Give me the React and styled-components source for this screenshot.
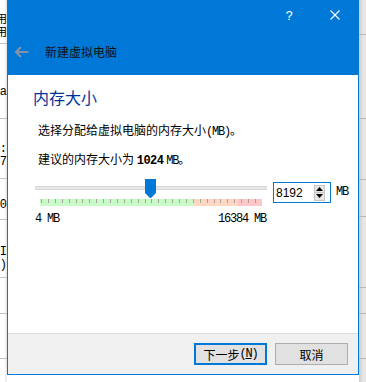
import React from "react";
import styled, { createGlobalStyle } from "styled-components";

const Global = createGlobalStyle`
  html, body { margin: 0; padding: 0; background: #ffffff; }
  body { width: 366px; height: 382px; overflow: hidden; font-family: "Noto Sans CJK SC", "Noto Sans", sans-serif; }
  * { box-sizing: border-box; }
`;

const CJK = `"Noto Sans CJK SC", "Noto Sans", sans-serif`;
const MONO = `"Liberation Mono", "DejaVu Sans Mono", monospace`;
const BLUE = "#0078d7";

const Page = styled.div`
  display: flex;
  width: 366px;
  height: 382px;
  overflow: hidden;
`;

const Strip = styled.div`
  width: 7px;
  flex: none;
  display: flex;
  flex-direction: column;
  background: ${(p) => (p.$right ? "linear-gradient(to right, #cdcdcd, #e9e9e9 70%, #e2e2e2)" : "linear-gradient(to right, #ffffff 60%, #e4e4e4)")};
`;

const StripRow = styled.div`
  height: ${(p) => p.$h}px;
  flex: none;
  border-bottom: 1px solid ${(p) => (p.$right ? "#b9b9b9" : "#c4c4c4")};
  display: flex;
  flex-direction: column;
  justify-content: ${(p) => p.$justify || "flex-end"};
  align-items: flex-end;
  gap: 1px;
  overflow: hidden;
  padding: ${(p) => p.$pad || "0"};
`;

const StripText = styled.div`
  font-family: ${MONO};
  font-size: 12px;
  line-height: 12px;
  color: #000;
  white-space: nowrap;
`;

const StripCJK = styled(StripText)`
  font-family: ${CJK};
  font-size: 11px;
  line-height: 12px;
  height: 12px;
  overflow: hidden;
`;

const Dialog = styled.div`
  width: 352px;
  height: 375px;
  flex: none;
  border: 1px solid ${BLUE};
  border-top: none;
  display: flex;
  flex-direction: column;
  background: #fff;
`;

const TitleBar = styled.div`
  height: 30px;
  background: ${BLUE};
  display: flex;
  justify-content: flex-end;
  flex: none;
`;

const CaptionButton = styled.div`
  width: 46px;
  height: 30px;
  display: flex;
  align-items: center;
  justify-content: center;
  color: #fff;
  font-family: "Liberation Sans", sans-serif;
  font-size: 13px;
`;

const Header = styled.div`
  height: 45px;
  background: ${BLUE};
  display: flex;
  align-items: center;
  padding-left: 7px;
  padding-bottom: 1px;
  flex: none;
`;

const BackArrow = styled.svg`
  width: 14px;
  height: 12px;
  margin-right: 16px;
`;

const HeaderTitle = styled.div`
  font-family: ${CJK};
  font-size: 12px;
  line-height: 14px;
  color: #111;
`;

const Content = styled.div`
  flex: 1;
  padding: 13px 0 0 25px;
  display: flex;
  flex-direction: column;
`;

const Heading = styled.div`
  font-family: ${CJK};
  font-size: 16px;
  line-height: 18px;
  color: #003399;
`;

const Para = styled.div`
  font-family: ${CJK};
  font-size: 12px;
  line-height: 14px;
  color: #000;
  margin-left: 5px;
  margin-top: ${(p) => p.$mt}px;
  white-space: nowrap;
`;

const Latin = styled.span`
  font-family: ${MONO};
  font-size: 12px;
  letter-spacing: ${(p) => (p.$bold ? "-0.5px" : "-1.2px")};
  font-weight: ${(p) => (p.$bold ? 700 : 400)};
`;

const SliderRow = styled.div`
  display: flex;
  align-items: flex-start;
  margin-top: 11px;
  margin-left: 2px;
`;

const SliderCol = styled.div`
  width: 232px;
  display: flex;
  flex-direction: column;
`;

const SliderBox = styled.div`
  position: relative;
  height: 27px;
`;

const Track = styled.div`
  margin-top: 7px;
  height: 4px;
  border-top: 1px solid #d6d6d6;
  border-bottom: 1px solid #d6d6d6;
  background: #e7e7e7;
`;

const Ticks = styled.svg`
  display: block;
  margin: 9px 0 0 5px;
`;

const Thumb = styled.svg`
  position: absolute;
  left: 110px;
  top: 0;
`;

const Scale = styled.div`
  display: flex;
  justify-content: space-between;
  margin-top: 7px;
  font-family: ${MONO};
  font-size: 12px;
  letter-spacing: -1.2px;
  line-height: 12px;
  color: #000;
  padding-right: 1px;
`;

const SpinBox = styled.div`
  width: 58px;
  height: 21px;
  margin: 3px 0 0 6px;
  border: 1px solid ${BLUE};
  display: flex;
  align-items: center;
  justify-content: space-between;
  padding: 0 5px 0 2px;
`;

const SpinValue = styled.div`
  font-family: "Liberation Sans", sans-serif;
  font-size: 12px;
  color: #000;
`;

const SpinButtons = styled.div`
  width: 11px;
  height: 16px;
  display: flex;
  flex-direction: column;
  border: 1px solid #c7c7c7;
  background: #e6e6e6;
`;

const SpinHalf = styled.div`
  flex: 1;
  display: flex;
  align-items: center;
  justify-content: center;
  border-top: ${(p) => (p.$bottom ? "1px solid #c7c7c7" : "none")};
`;

const Unit = styled.div`
  font-family: ${MONO};
  font-size: 12px;
  letter-spacing: -1.2px;
  margin: 7px 0 0 5px;
  line-height: 12px;
`;

const Footer = styled.div`
  height: 41px;
  flex: none;
  background: #f0f0f0;
  border-top: 1px solid #dfdfdf;
  display: flex;
  justify-content: flex-end;
  align-items: flex-start;
  gap: 8px;
  padding: 9px 10px 0 0;
`;

const Button = styled.div`
  width: 73px;
  height: 22px;
  background: #e1e1e1;
  border: ${(p) => (p.$primary ? `2px solid ${BLUE}` : "1px solid #adadad")};
  display: flex;
  align-items: center;
  justify-content: center;
  font-family: ${CJK};
  font-size: 12px;
  color: #000;
  white-space: nowrap;
`;

const Accel = styled.span`
  font-family: ${MONO};
  font-size: 12px;
  letter-spacing: -1.2px;
  u { text-decoration: underline; }
`;

function TickBar() {
  const ticks = [];
  for (let i = 0; i <= 32; i++) {
    const x = Math.round(1 + i * 6.9) + 0.5;
    ticks.push(<line key={i} x1={x} y1={0} x2={x} y2={4} stroke="#a8a49c" strokeWidth="1" />);
  }
  return (
    <Ticks width="222" height="7" viewBox="0 0 222 7">
      <rect x="0" y="0" width="154" height="7" fill="#c8fbc8" />
      <rect x="154" y="0" width="44" height="7" fill="#fed6c2" />
      <rect x="198" y="0" width="24" height="7" fill="#fec6c6" />
      {ticks}
    </Ticks>
  );
}

export default function App() {
  return (
    <>
      <Global />
      <Page>
        <Strip>
          <StripRow $h={44} $justify="flex-start" $pad="12px 0 0 0">
            <StripCJK>用</StripCJK>
            <StripCJK>用</StripCJK>
          </StripRow>
          <StripRow $h={75} $pad="0 0 20px 0">
            <StripText>ta</StripText>
          </StripRow>
          <StripRow $h={60} $pad="0 0 10px 0">
            <StripText>t:</StripText>
            <StripText>/07</StripText>
          </StripRow>
          <StripRow $h={41} $pad="0 0 8px 0">
            <StripText>00</StripText>
          </StripRow>
          <StripRow $h={58} $pad="0 0 6px 0">
            <StripText>CI</StripText>
            <StripText>n)</StripText>
          </StripRow>
          <StripRow $h={36} />
          <StripRow $h={45} />
        </Strip>
        <Dialog>
          <TitleBar>
            <CaptionButton>?</CaptionButton>
            <CaptionButton>
              <svg width="10" height="10" viewBox="0 0 10 10">
                <path d="M0.5 0.5 L9.5 9.5 M9.5 0.5 L0.5 9.5" stroke="#fff" strokeWidth="1.1" fill="none" />
              </svg>
            </CaptionButton>
          </TitleBar>
          <Header>
            <BackArrow viewBox="0 0 14 12">
              <path d="M1 6 H13.5 M6 1 L1 6 L6 11" stroke="#8593a8" strokeWidth="2" fill="none" />
            </BackArrow>
            <HeaderTitle>新建虚拟电脑</HeaderTitle>
          </Header>
          <Content>
            <Heading>内存大小</Heading>
            <Para $mt={17}>
              选择分配给虚拟电脑的内存大小<Latin>(MB)</Latin>。
            </Para>
            <Para $mt={13}>
              建议的内存大小为 <Latin $bold>1024</Latin> <Latin>MB</Latin>。
            </Para>
            <SliderRow>
              <SliderCol>
                <SliderBox>
                  <Track />
                  <TickBar />
                  <Thumb width="11" height="19" viewBox="0 0 11 19">
                    <polygon points="0,0 11,0 11,14 6,19 5,19 0,14" fill={BLUE} />
                  </Thumb>
                </SliderBox>
                <Scale>
                  <span>4 MB</span>
                  <span>16384 MB</span>
                </Scale>
              </SliderCol>
              <SpinBox>
                <SpinValue>8192</SpinValue>
                <SpinButtons>
                  <SpinHalf>
                    <svg width="7" height="4" viewBox="0 0 7 4"><polygon points="3.5,0 7,4 0,4" fill="#000" /></svg>
                  </SpinHalf>
                  <SpinHalf $bottom>
                    <svg width="7" height="4" viewBox="0 0 7 4"><polygon points="0,0 7,0 3.5,4" fill="#000" /></svg>
                  </SpinHalf>
                </SpinButtons>
              </SpinBox>
              <Unit>MB</Unit>
            </SliderRow>
          </Content>
          <Footer>
            <Button $primary>
              下一步<Accel>(<u>N</u>)</Accel>
            </Button>
            <Button>取消</Button>
          </Footer>
        </Dialog>
        <Strip $right>
          <StripRow $right $h={35} />
          <StripRow $right $h={84} />
          <StripRow $right $h={61} />
          <StripRow $right $h={37} />
          <StripRow $right $h={71} />
          <StripRow $right $h={26} />
          <StripRow $right $h={45} />
        </Strip>
      </Page>
    </>
  );
}
